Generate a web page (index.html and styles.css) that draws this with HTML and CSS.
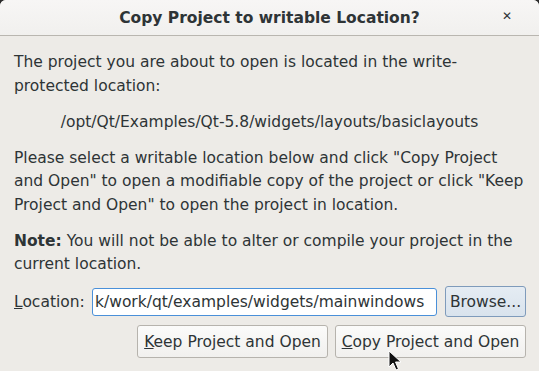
FILE: index.html
```html
<!DOCTYPE html>
<html lang="en">
<head>
  <meta charset="UTF-8" />
  <title>Copy Project to writable Location?</title>
  <link rel="stylesheet" href="styles.css">
</head>
<body>
<div class="dialog">
  <div class="titlebar">
    <span class="title">Copy Project to writable Location?</span>
    <span class="close">&#x2715;</span>
  </div>
  <div class="content">
    <p>The project you are about to open is located in the write-<br>protected location:</p>
    <p class="path">/opt/Qt/Examples/Qt-5.8/widgets/layouts/basiclayouts</p>
    <p>Please select a writable location below and click "Copy Project<br>and Open" to open a modifiable copy of the project or click "Keep<br>Project and Open" to open the project in location.</p>
    <p><b>Note:</b> You will not be able to alter or compile your project in the<br>current location.</p>
    <div class="location-row">
      <label><u>L</u>ocation:</label>
      <div class="input">k/work/qt/examples/widgets/mainwindows</div>
      <button class="btn browse">Browse...</button>
    </div>
    <div class="buttons">
      <button class="btn"><u>K</u>eep Project and Open</button>
      <button class="btn"><u>C</u>opy Project and Open</button>
    </div>
  </div>
  <svg class="cursor" width="14" height="22" viewBox="0 0 14 22">
    <path d="M1 1 L1 17 L5 13 L8 20 L10.5 19 L7.5 12 L13 12 Z" fill="#111" stroke="#fff" stroke-width="1"/>
  </svg>
</div>
</body>
</html>
```

FILE: styles.css
```css
html, body {
    margin: 0;
    padding: 0;
    background: #2b2b2b;
}
.dialog {
    position: relative;
    width: 539px;
    height: 371px;
    background: #edebe7;
    font-family: "DejaVu Sans", sans-serif;
    font-size: 15.5px;
    color: #2e3436;
    overflow: hidden;
    border-radius: 6px 6px 0 0;
}
.titlebar {
    height: 35px;
    display: flex;
    align-items: center;
    justify-content: center;
    background: linear-gradient(#f7f6f5, #f1f0ee);
    border-bottom: 1px solid #b9b6b0;
    position: relative;
}
.title {
    font-weight: bold;
    font-size: 15.5px;
    color: #2e3436;
}
.close {
    position: absolute;
    right: 27px;
    top: 9px;
    font-size: 12px;
    font-weight: bold;
    color: #2e3436;
}
.content {
    padding: 15px 10px 0 14px;
}
.content p {
    margin: 0 0 12.5px 0;
    line-height: 23.5px;
    white-space: nowrap;
}
.content p.path {
    text-align: center;
    padding-right: 4px;
}
.location-row {
    display: flex;
    align-items: center;
    margin-top: -3px;
}
.location-row label {
    width: 78px;
}
.input {
    width: 339px;
    height: 26px;
    line-height: 26px;
    padding: 0 2px;
    background: #fff;
    border: 1px solid #4a90d9;
    border-radius: 3px;
    white-space: nowrap;
    overflow: hidden;
}
.btn {
    font-family: inherit;
    font-size: 15.5px;
    color: #2e3436;
    background: linear-gradient(#fbfbfa, #f1f0ee);
    border: 1px solid #b6b3ad;
    border-radius: 3px;
    padding: 0;
    height: 31px;
    white-space: nowrap;
}
.browse {
    margin-left: 8px;
    width: 81px;
    background: linear-gradient(#e5ecf3, #d9e3ed);
    border-color: #7f9bbb;
}
.buttons {
    display: flex;
    justify-content: flex-end;
    gap: 7px;
    margin-top: 8px;
    padding-right: 3px;
}
.buttons .btn {
    width: 191px;
    height: 33px;
}
.cursor {
    position: absolute;
    left: 388px;
    top: 350px;
}
```
